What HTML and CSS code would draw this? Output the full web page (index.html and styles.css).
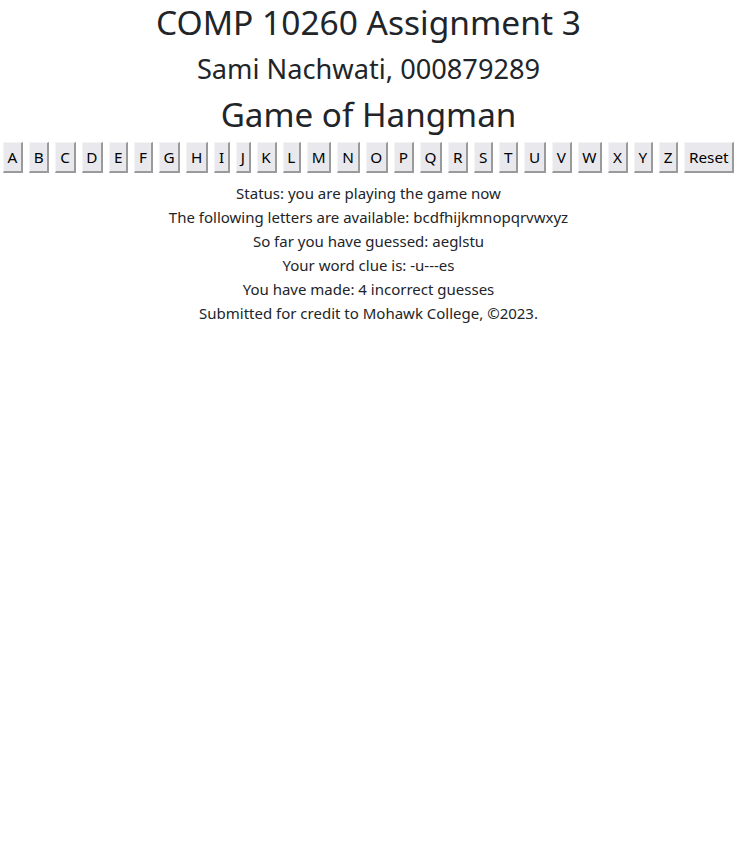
FILE: index.html
```html
<!DOCTYPE html>
<html lang="en">
<head>
<meta charset="utf-8">
<title>Game of Hangman</title>
<link rel="stylesheet" href="styles.css">
</head>
<body>
<h1 class="title">COMP 10260 Assignment 3</h1>
<h2 class="author">Sami Nachwati, 000879289</h2>
<h1 class="title game">Game of Hangman</h1>
<div class="letters">
  <button class="key">A</button>
  <button class="key">B</button>
  <button class="key">C</button>
  <button class="key">D</button>
  <button class="key">E</button>
  <button class="key">F</button>
  <button class="key">G</button>
  <button class="key">H</button>
  <button class="key">I</button>
  <button class="key">J</button>
  <button class="key">K</button>
  <button class="key">L</button>
  <button class="key">M</button>
  <button class="key">N</button>
  <button class="key">O</button>
  <button class="key">P</button>
  <button class="key">Q</button>
  <button class="key">R</button>
  <button class="key">S</button>
  <button class="key">T</button>
  <button class="key">U</button>
  <button class="key">V</button>
  <button class="key">W</button>
  <button class="key">X</button>
  <button class="key">Y</button>
  <button class="key">Z</button>
  <button class="key">Reset</button>
</div>
<div class="info">
  <p class="line">Status: you are playing the game now</p>
  <p class="line">The following letters are available: bcdfhijkmnopqrvwxyz</p>
  <p class="line">So far you have guessed: aeglstu</p>
  <p class="line">Your word clue is: -u---es</p>
  <p class="line">You have made: 4 incorrect guesses</p>
  <p class="line">Submitted for credit to Mohawk College, ©2023.</p>
</div>
</body>
</html>
```
FILE: styles.css
```css
html, body {
  margin: 0;
  padding: 0;
  background: #ffffff;
}

body {
  padding-top: 2px;
  font-family: "Noto Sans", "Open Sans", sans-serif;
  font-size: 15px;
  line-height: 24px;
  color: #212529;
  text-align: center;
}

.title {
  margin: 0 0 10px;
  font-size: 33.5px;
  line-height: 40px;
  font-weight: 400;
}

.game {
  margin-bottom: 7px;
  font-size: 33.2px;
}

.author {
  margin: 0 0 10px;
  font-size: 27.2px;
  line-height: 33px;
  font-weight: 400;
}

.letters {
  display: flex;
  flex-wrap: wrap;
  justify-content: center;
  gap: 6px;
  margin-top: 5px;
}

.key {
  font-family: inherit;
  font-size: 15.3px;
  line-height: 24px;
  color: #000000;
  background: #e9e9ed;
  padding: 2px 3.75px;
  margin: 0;
  border-style: solid;
  border-width: 1px 2px 2px 1px;
  border-color: #f4f4f6 #9a9a9a #9a9a9a #f4f4f6;
  border-radius: 0;
  cursor: pointer;
}

.info {
  margin-top: 8px;
}

.line {
  margin: 0;
}
```
